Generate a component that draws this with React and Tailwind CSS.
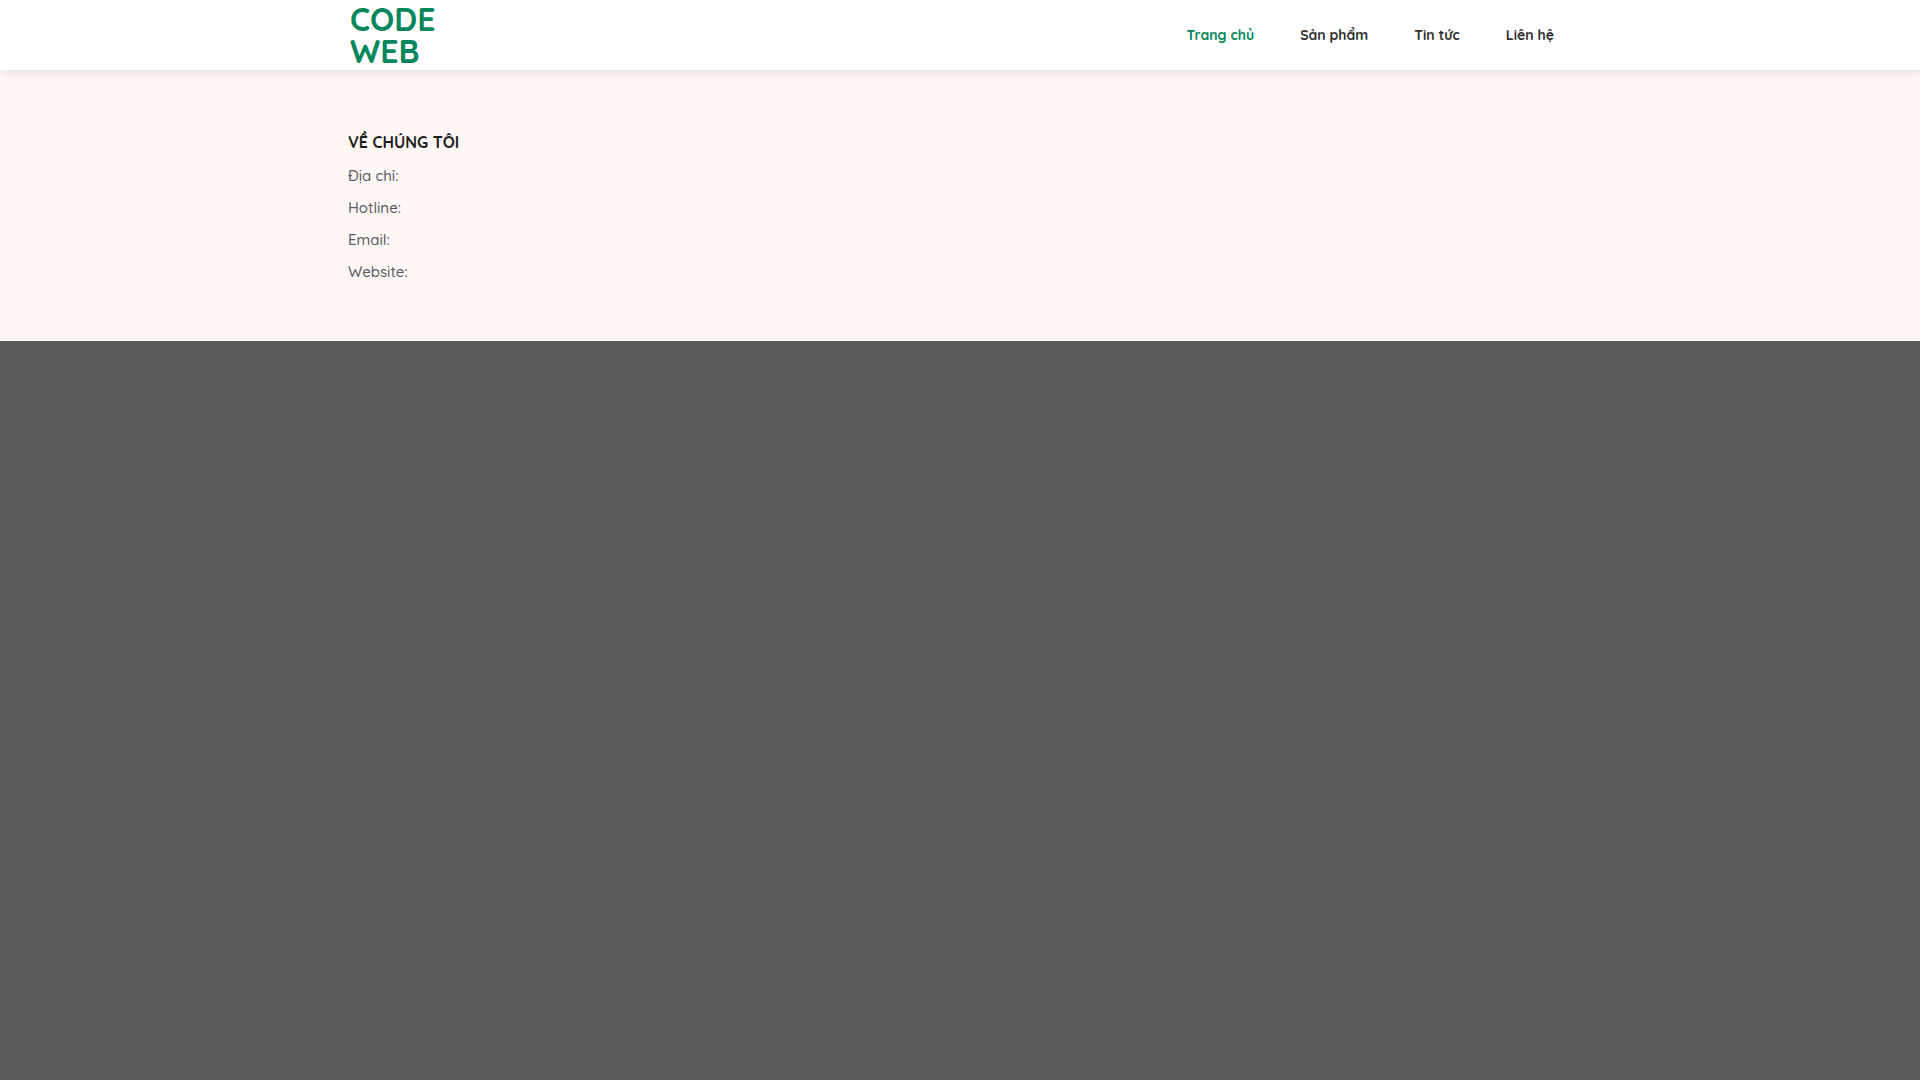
import React from 'react';

const NAV_ITEMS = [
  { label: 'Trang chủ', href: '#home' },
  { label: 'Sản phẩm', href: '#products' },
  { label: 'Tin tức', href: '#news' },
  { label: 'Liên hệ', href: '#contact' },
];

const CONTACT_LINES = ['Địa chỉ:', 'Hotline:', 'Email:', 'Website:'];

function Header() {
  return (
    <header className="relative w-full bg-white shadow-[1px_1px_10px_rgba(0,0,0,0.15)]">
      <div className="mx-auto flex h-[70px] max-w-[1230px] items-center justify-between pr-[21px] pl-[5px]">
        <a href="#home" className="w-24 text-[32px] leading-8 font-bold text-[#05865c]">
          CODE WEB
        </a>
        <nav className="flex gap-[46px]">
          {NAV_ITEMS.map((item, index) => (
            <a
              key={item.label}
              href={item.href}
              className={
                index === 0
                  ? 'text-sm font-bold text-[#05865c]'
                  : 'text-sm font-bold text-[#2f2f2f]'
              }
            >
              {item.label}
            </a>
          ))}
        </nav>
      </div>
    </header>
  );
}

function Footer() {
  return (
    <footer>
      <section className="bg-[#fff7f5] pt-[60px] pb-[53px]">
        <div className="mx-auto max-w-[1230px] px-[3px]">
          <h2 className="mb-1.5 text-base leading-6 font-bold text-[#1c1c1c]">VỀ CHÚNG TÔI</h2>
          {CONTACT_LINES.map((line) => (
            <p key={line} className="text-[15px] leading-8 font-medium text-[#54595f]">
              {line}
            </p>
          ))}
        </div>
      </section>
    </footer>
  );
}

export default function App() {
  return (
    <div className="min-h-screen bg-[#5b5b5b] font-['Quicksand','Lato',sans-serif]">
      <Header />
      <Footer />
    </div>
  );
}
